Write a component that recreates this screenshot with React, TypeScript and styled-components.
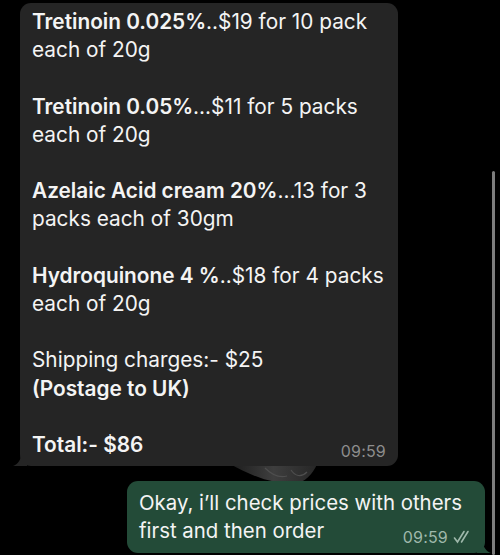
import React from "react";
import styled, { createGlobalStyle } from "styled-components";

const Global = createGlobalStyle`
	html, body {
		margin: 0;
		padding: 0;
		background: #000;
	}
	body {
		font-family: Inter, "Noto Sans", "Liberation Sans", sans-serif;
		-webkit-font-smoothing: antialiased;
	}
`;

const Chat = styled.div`
	position: relative;
	width: 500px;
	height: 555px;
	overflow: hidden;
	background: #000;
	display: flex;
	flex-direction: column;
	padding-top: 3px;
	box-sizing: border-box;
`;

const Row = styled.div<{ $out?: boolean }>`
	position: relative;
	z-index: 1;
	display: flex;
	justify-content: ${({ $out }) => ($out ? "flex-end" : "flex-start")};
	padding: ${({ $out }) => ($out ? "15px 15px 0 0" : "0 0 0 20px")};
`;

const Bubble = styled.div<{ $out?: boolean; $w: number }>`
	position: relative;
	width: ${({ $w }) => $w}px;
	box-sizing: border-box;
	background: ${({ $out }) => ($out ? "#234b38" : "#252525")};
	color: #f4f4f4;
	border-radius: 11px;
	padding: ${({ $out }) => ($out ? "8px 12px 7px 12px" : "5px 12px 7px 12px")};
	font-size: ${({ $out }) => ($out ? "20.4px" : "20.8px")};
	line-height: 28.2px;
`;

const Para = styled.p`
	margin: 0 0 28.2px 0;
	&:last-child {
		margin-bottom: 0;
	}
`;

const B = styled.span`
	font-weight: 600;
`;

const LastLine = styled.div`
	display: flex;
	justify-content: space-between;
	align-items: flex-end;
`;

const Meta = styled.span<{ $out?: boolean }>`
	display: inline-flex;
	align-items: center;
	gap: 5px;
	font-size: 16px;
	line-height: 18px;
	letter-spacing: 0.2px;
	color: ${({ $out }) => ($out ? "#9fb8ab" : "#8d8d8d")};
	position: relative;
	top: 1px;
`;

const FloatMeta = styled(Meta)`
	float: right;
	top: 11px;
	margin-left: 12px;
`;

const Tail = styled.svg<{ $out?: boolean }>`
	position: absolute;
	bottom: 0;
	${({ $out }) => ($out ? "right: -6px;" : "left: -7px;")}
	width: 14px;
	height: 12px;
`;

const Blob = styled.svg`
	position: absolute;
	left: 225px;
	top: 462px;
	width: 95px;
	height: 24px;
	z-index: 0;
`;

const Scrollbar = styled.div`
	position: absolute;
	right: 5px;
	top: 171px;
	bottom: 0;
	width: 3px;
	border-radius: 2px;
	background: #7d7d7d;
	z-index: 2;
`;

const Checks = () => (
	<svg width="20" height="14" viewBox="0 0 20 14" fill="none" stroke="#9fb8ab" strokeWidth="1.6" strokeLinecap="round">
		<path d="M1.5 8 L4.5 12 L11 1.5" />
		<path d="M8.5 12 L15 1.5" />
	</svg>
);

export default function App() {
	return (
		<>
			<Global />
			<Chat>
				<Blob viewBox="0 0 95 24">
					<defs>
						<linearGradient id="bg" x1="0" y1="0" x2="1" y2="0">
							<stop offset="0" stopColor="#1c1c1c" />
							<stop offset="0.5" stopColor="#3e3e3e" />
							<stop offset="1" stopColor="#262626" />
						</linearGradient>
					</defs>
					<path d="M5 2 C20 10 40 20 55 20 L70 22 C80 20 88 12 92 2 Z" fill="url(#bg)" />
					<path d="M40 6 C48 14 55 16 62 14 M66 8 C70 14 76 16 82 10" stroke="#4e4e4e" strokeWidth="1.2" fill="none" />
				</Blob>

				<Row>
					<Bubble $w={378}>
						<Para>
							<B>Tretinoin 0.025%</B>..$19 for 10 pack each of 20g
						</Para>
						<Para>
							<B>Tretinoin 0.05%</B>...$11 for 5 packs each of 20g
						</Para>
						<Para>
							<B>Azelaic Acid cream 20%</B>...13 for 3 packs each of 30gm
						</Para>
						<Para>
							<B>Hydroquinone 4 %</B>..$18 for 4 packs each of 20g
						</Para>
						<Para>
							Shipping charges:- $25
							<br />
							<B>(Postage to UK)</B>
						</Para>
						<LastLine>
							<B>Total:- $86</B>
							<Meta>09:59</Meta>
						</LastLine>
						<Tail viewBox="0 0 14 12">
							<path d="M14 0 L14 12 L0 12 C5 10 8 6 8 0 Z" fill="#252525" />
						</Tail>
					</Bubble>
				</Row>

				<Row $out>
					<Bubble $out $w={358}>
						Okay, i’ll check prices with others first and then order
						<FloatMeta $out>
							09:59 <Checks />
						</FloatMeta>
						<Tail $out viewBox="0 0 14 12">
							<path d="M0 0 L0 12 L14 12 C9 10 6 6 6 0 Z" fill="#234b38" />
						</Tail>
					</Bubble>
				</Row>

				<Scrollbar />
			</Chat>
		</>
	);
}
